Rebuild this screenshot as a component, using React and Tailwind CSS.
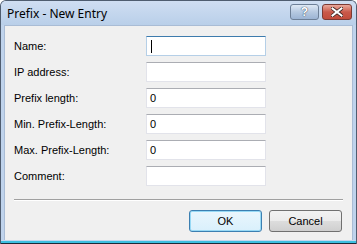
import React from 'react';

const fields = [
    { label: 'Name:', value: '', focused: true },
    { label: 'IP address:', value: '' },
    { label: 'Prefix length:', value: '0' },
    { label: 'Min. Prefix-Length:', value: '0' },
    { label: 'Max. Prefix-Length:', value: '0' },
    { label: 'Comment:', value: '' },
];

const Field = ({ value, focused }) => (
    <div
        className={
            focused
                ? 'h-[20px] bg-white border border-[#b5cfe7] border-t-[#3d7bad] flex items-center pl-[3px]'
                : 'h-[20px] bg-white border border-[#e2e3ea] border-t-[#abadb3] flex items-center pl-[3px]'
        }
    >
        {focused && <div className="w-[1px] h-[13px] bg-black ml-[1px]" />}
        <span className="text-[11px] leading-none text-black">{value}</span>
    </div>
);

const App = () => {
    return (
        <div
            className="w-[357px] h-[244px] flex flex-col bg-[#bfd3ec] border border-[#4f5d70] border-b-0 rounded-t-[6px] overflow-hidden"
            style={{ fontFamily: '"Liberation Sans", Arial, sans-serif' }}
        >
            {/* title bar */}
            <div className="h-[24px] shrink-0 flex items-center justify-between bg-gradient-to-b from-[#cfdef2] to-[#b9cfe9] pl-[6px] pr-[4px]">
                <span
                    className="text-[12px] text-black pt-[1px]"
                    style={{ fontFamily: '"Noto Sans", "Open Sans", sans-serif' }}
                >
                    Prefix - New Entry
                </span>
                <div className="flex gap-[3px] mb-[2px]">
                    <div className="w-[29px] h-[16px] rounded-[3px] border border-[#6d7f97] bg-gradient-to-b from-[#dfe9f5] via-[#b6c9e1] to-[#9cb4d4] flex items-center justify-center">
                        <span className="text-[12px] font-bold leading-none text-white [text-shadow:0_0_1px_#3a4b63,0_0_1px_#3a4b63]">?</span>
                    </div>
                    <div className="w-[30px] h-[16px] rounded-[3px] border border-[#7b3a33] bg-gradient-to-b from-[#e9a99c] via-[#c9594a] to-[#c24c3b] flex items-center justify-center">
                        <svg width="12" height="10" viewBox="0 0 12 10">
                            <path d="M1.5 1.5 L10.5 8.5 M10.5 1.5 L1.5 8.5" stroke="#3b2420" strokeWidth="3.6" strokeLinecap="square" />
                            <path d="M1.5 1.5 L10.5 8.5 M10.5 1.5 L1.5 8.5" stroke="#ffffff" strokeWidth="2" strokeLinecap="square" />
                        </svg>
                    </div>
                </div>
            </div>

            {/* client area */}
            <div className="flex-1 flex flex-col px-[3px]">
                <div className="flex-1 flex flex-col bg-[#f0f0f0] border border-[#a9bcd5] border-b-0 pt-[10px] px-[9px]">
                    <div className="grid grid-cols-[132px_120px] gap-y-[6px] items-center">
                        {fields.map((f) => (
                            <React.Fragment key={f.label}>
                                <span className="text-[11px] text-black leading-none">{f.label}</span>
                                <Field value={f.value} focused={f.focused} />
                            </React.Fragment>
                        ))}
                    </div>
                    <div className="mt-[13px] border-t border-[#a0a0a0] border-b border-b-white" />
                    <div className="flex justify-end gap-[7px] mt-[9px] pr-[1px]">
                        <button className="w-[73px] h-[22px] rounded-[3px] border border-[#3c7fb1] bg-gradient-to-b from-[#eaf6fd] to-[#d9f0fc] shadow-[inset_0_0_0_1px_#97d9f5] text-[11px] text-black">
                            OK
                        </button>
                        <button className="w-[73px] h-[22px] rounded-[3px] border border-[#707070] bg-[linear-gradient(#f2f2f2,#ebebeb_50%,#dddddd_50%,#cfcfcf)] text-[11px] text-black">
                            Cancel
                        </button>
                    </div>
                </div>
            </div>

            {/* bottom edge */}
            <div className="h-[1px] shrink-0 bg-[#c3d7ef]" />
            <div className="h-[2px] shrink-0 bg-[#3cbfe0]" />
            <div className="h-[1px] shrink-0 bg-[#1c2a38]" />
        </div>
    );
};

export default App;
